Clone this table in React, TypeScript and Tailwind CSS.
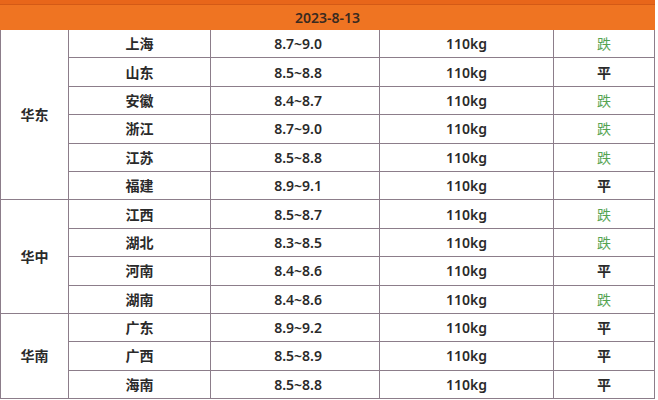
const ROWS: { region?: string; span?: number; city: string; price: string; trend: string }[] = [
  { region: "华东", span: 6, city: "上海", price: "8.7~9.0", trend: "跌" },
  { city: "山东", price: "8.5~8.8", trend: "平" },
  { city: "安徽", price: "8.4~8.7", trend: "跌" },
  { city: "浙江", price: "8.7~9.0", trend: "跌" },
  { city: "江苏", price: "8.5~8.8", trend: "跌" },
  { city: "福建", price: "8.9~9.1", trend: "平" },
  { region: "华中", span: 4, city: "江西", price: "8.5~8.7", trend: "跌" },
  { city: "湖北", price: "8.3~8.5", trend: "跌" },
  { city: "河南", price: "8.4~8.6", trend: "平" },
  { city: "湖南", price: "8.4~8.6", trend: "跌" },
  { region: "华南", span: 3, city: "广东", price: "8.9~9.2", trend: "平" },
  { city: "广西", price: "8.5~8.9", trend: "平" },
  { city: "海南", price: "8.5~8.8", trend: "平" },
];

const cell = "flex items-center justify-center border-r-[1.5px] border-b-[1.5px] border-[#8c7d8a]";

export default function App() {
  return (
    <div
      className="w-[658px] h-[400px] overflow-hidden bg-white text-[14px] font-semibold text-[#2a2a2a]"
      style={{ fontFamily: '"Noto Sans", "Noto Sans CJK SC", sans-serif' }}
    >
      <div className="w-[655px] border-t-[4px] border-[#e8661a] bg-[#ef7422]">
        <div className="h-[1px] bg-[#d45a16]" />
        <div className="h-[25px] flex items-center justify-center text-[#3a2a20]">2023-8-13</div>
      </div>
      <div className="w-[654px] grid grid-cols-[68px_142px_169px_174px_101px] auto-rows-[28.4px] border-l-[1.5px] border-[#8c7d8a]">
        {ROWS.map((r, i) => (
          <div key={i} className="contents">
            {r.region && (
              <div className={cell} style={{ gridRow: `span ${r.span}` }}>
                {r.region}
              </div>
            )}
            <div className={cell}>{r.city}</div>
            <div className={`${cell} justify-end pr-[57px]`}>{r.price}</div>
            <div className={cell}>110kg</div>
            <div className={`${cell} ${r.trend === "跌" ? "text-[#55a452] font-normal" : ""}`}>{r.trend}</div>
          </div>
        ))}
      </div>
    </div>
  );
}
